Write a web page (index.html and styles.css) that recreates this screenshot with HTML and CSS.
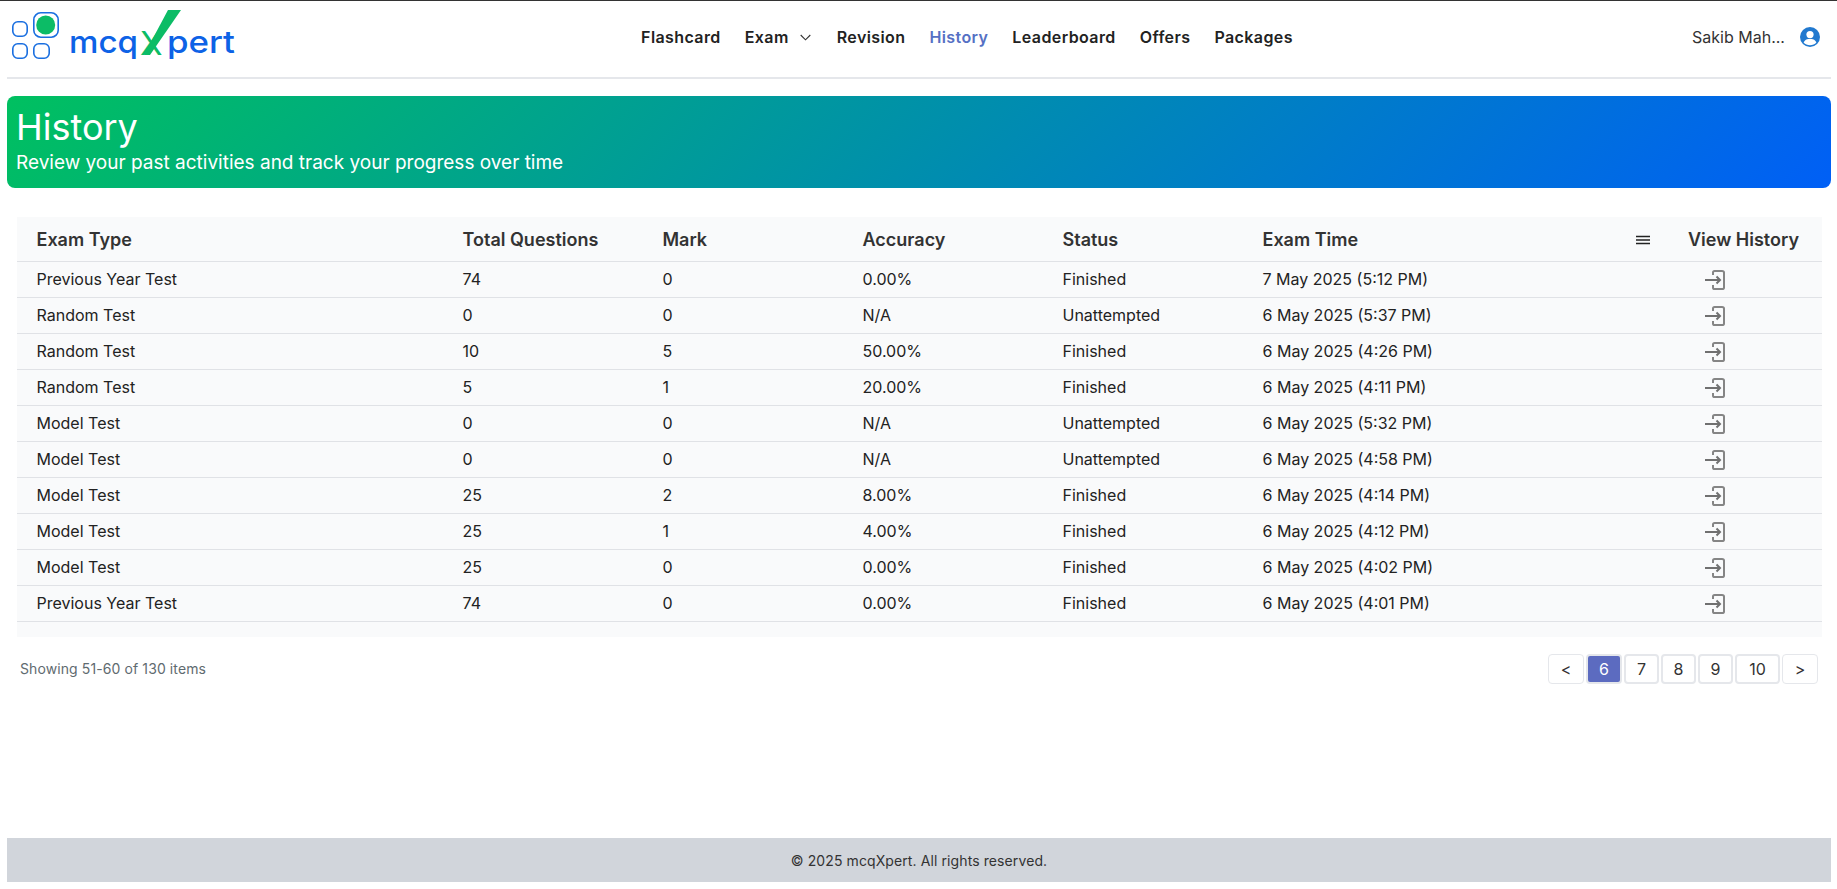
FILE: index.html
```html
<!DOCTYPE html>
<html lang="en">
<head>
    <meta charset="UTF-8">
    <meta name="viewport" content="width=device-width, initial-scale=1.0">
    <title>History - mcqXpert</title>
    <link rel="stylesheet" href="styles.css">
</head>
<body>
    <header class="header">
        <a class="logo" href="#">
            <svg class="logo-mark" width="58" height="56" viewBox="0 0 58 56" fill="none">
                <rect x="2.8" y="15.8" width="14.4" height="14.4" rx="5" stroke="#1a6fe0" stroke-width="1.6"/>
                <rect x="2.8" y="37.8" width="14.4" height="14.4" rx="5" stroke="#1a6fe0" stroke-width="1.6"/>
                <rect x="23.8" y="37.8" width="15.4" height="14.4" rx="5" stroke="#1a6fe0" stroke-width="1.6"/>
                <rect x="23.8" y="6.8" width="24.4" height="24.4" rx="7" stroke="#1a6fe0" stroke-width="1.6"/>
                <circle cx="35.7" cy="19" r="9.5" fill="#0cbc66"/>
            </svg>
            <svg class="logo-word" width="170" height="62" viewBox="0 0 170 62">
                <text x="0" y="47" class="logo-blue" textLength="69" lengthAdjust="spacingAndGlyphs">mcq</text>
                <text x="71" y="49" class="logo-green">X</text>
                <path d="M75 49 L99 4 H112 L81 49 Z" fill="#0cbc66"/>
                <text x="98" y="47" class="logo-blue" textLength="68" lengthAdjust="spacingAndGlyphs">pert</text>
            </svg>
        </a>
        <nav class="nav">
            <a href="#">Flashcard</a>
            <a href="#" class="nav-exam">Exam
                <svg width="11" height="7" viewBox="0 0 11 7" fill="none"><path d="M0.7 1 L5.5 5.8 L10.3 1" stroke="#333" stroke-width="1.1"/></svg>
            </a>
            <a href="#">Revision</a>
            <a href="#" class="active">History</a>
            <a href="#">Leaderboard</a>
            <a href="#">Offers</a>
            <a href="#">Packages</a>
        </nav>
        <div class="user">
            <span>Sakib Mah...</span>
            <svg width="20" height="20" viewBox="0 0 20 20">
                <circle cx="10" cy="10" r="10" fill="#2179cf"/>
                <circle cx="10" cy="7.6" r="3.6" fill="#fff"/>
                <path d="M3.6 15.6 C5 12.4 7.5 12 10 12 C12.5 12 15 12.4 16.4 15.6 C14.8 17.4 12.5 18.3 10 18.3 C7.5 18.3 5.2 17.4 3.6 15.6 Z" fill="#fff"/>
            </svg>
        </div>
    </header>

    <section class="hero">
        <h1>History</h1>
        <p>Review your past activities and track your progress over time</p>
    </section>

    <main class="content">
        <div class="table-wrap">
            <table class="history-table">
                <colgroup>
                    <col class="col-type">
                    <col class="col-num">
                    <col class="col-num">
                    <col class="col-num">
                    <col class="col-num">
                    <col class="col-time">
                    <col class="col-view">
                </colgroup>
                <thead>
                    <tr>
                        <th>Exam Type</th>
                        <th>Total Questions</th>
                        <th>Mark</th>
                        <th>Accuracy</th>
                        <th>Status</th>
                        <th class="time-head">Exam Time
                            <svg class="menu-icon" width="14" height="10" viewBox="0 0 14 10"><path d="M0 1.5H14M0 5H14M0 8.5H14" stroke="#222" stroke-width="1.5"/></svg>
                        </th>
                        <th class="view-head">View History</th>
                    </tr>
                </thead>
                <tbody>
                    <tr><td>Previous Year Test</td><td>74</td><td>0</td><td>0.00%</td><td>Finished</td><td>7 May 2025 (5:12 PM)</td><td class="view-cell"><svg class="enter" width="22" height="20" viewBox="0 0 22 20" fill="none"><use href="#enter-icon"/></svg></td></tr>
                    <tr><td>Random Test</td><td>0</td><td>0</td><td>N/A</td><td>Unattempted</td><td>6 May 2025 (5:37 PM)</td><td class="view-cell"><svg class="enter" width="22" height="20" viewBox="0 0 22 20" fill="none"><use href="#enter-icon"/></svg></td></tr>
                    <tr><td>Random Test</td><td>10</td><td>5</td><td>50.00%</td><td>Finished</td><td>6 May 2025 (4:26 PM)</td><td class="view-cell"><svg class="enter" width="22" height="20" viewBox="0 0 22 20" fill="none"><use href="#enter-icon"/></svg></td></tr>
                    <tr><td>Random Test</td><td>5</td><td>1</td><td>20.00%</td><td>Finished</td><td>6 May 2025 (4:11 PM)</td><td class="view-cell"><svg class="enter" width="22" height="20" viewBox="0 0 22 20" fill="none"><use href="#enter-icon"/></svg></td></tr>
                    <tr><td>Model Test</td><td>0</td><td>0</td><td>N/A</td><td>Unattempted</td><td>6 May 2025 (5:32 PM)</td><td class="view-cell"><svg class="enter" width="22" height="20" viewBox="0 0 22 20" fill="none"><use href="#enter-icon"/></svg></td></tr>
                    <tr><td>Model Test</td><td>0</td><td>0</td><td>N/A</td><td>Unattempted</td><td>6 May 2025 (4:58 PM)</td><td class="view-cell"><svg class="enter" width="22" height="20" viewBox="0 0 22 20" fill="none"><use href="#enter-icon"/></svg></td></tr>
                    <tr><td>Model Test</td><td>25</td><td>2</td><td>8.00%</td><td>Finished</td><td>6 May 2025 (4:14 PM)</td><td class="view-cell"><svg class="enter" width="22" height="20" viewBox="0 0 22 20" fill="none"><use href="#enter-icon"/></svg></td></tr>
                    <tr><td>Model Test</td><td>25</td><td>1</td><td>4.00%</td><td>Finished</td><td>6 May 2025 (4:12 PM)</td><td class="view-cell"><svg class="enter" width="22" height="20" viewBox="0 0 22 20" fill="none"><use href="#enter-icon"/></svg></td></tr>
                    <tr><td>Model Test</td><td>25</td><td>0</td><td>0.00%</td><td>Finished</td><td>6 May 2025 (4:02 PM)</td><td class="view-cell"><svg class="enter" width="22" height="20" viewBox="0 0 22 20" fill="none"><use href="#enter-icon"/></svg></td></tr>
                    <tr><td>Previous Year Test</td><td>74</td><td>0</td><td>0.00%</td><td>Finished</td><td>6 May 2025 (4:01 PM)</td><td class="view-cell"><svg class="enter" width="22" height="20" viewBox="0 0 22 20" fill="none"><use href="#enter-icon"/></svg></td></tr>
                </tbody>
            </table>
        </div>

        <div class="table-footer">
            <span class="showing">Showing 51-60 of 130 items</span>
            <div class="pagination">
                <a href="#" class="arrow">&lt;</a>
                <a href="#" class="current">6</a>
                <a href="#">7</a>
                <a href="#">8</a>
                <a href="#">9</a>
                <a href="#" class="wide">10</a>
                <a href="#" class="arrow">&gt;</a>
            </div>
        </div>
    </main>

    <footer class="footer">© 2025 mcqXpert. All rights reserved.</footer>

    <svg class="icon-defs" width="0" height="0">
        <defs>
            <g id="enter-icon">
                <path d="M9 5 V2.6 Q9 1 10.6 1 H18 Q20 1 20 2.6 V17.4 Q20 19 18 19 H10.6 Q9 19 9 17.4 V15" stroke="#858585" stroke-width="2"/>
                <path d="M1 10 H16 M12.5 6.5 L16 10 L12.5 13.5" stroke="#707070" stroke-width="2"/>
            </g>
        </defs>
    </svg>
</body>
</html>
```

FILE: styles.css
```css
* {
    box-sizing: border-box;
}

body {
    margin: 0;
    padding: 0 6px 0 7px;
    min-height: 889px;
    display: flex;
    flex-direction: column;
    background-color: #fff;
    border-top: 1px solid #333;
    font-family: 'Inter', 'Liberation Sans', sans-serif;
    color: #222;
}

a {
    text-decoration: none;
    color: inherit;
}

.header {
    height: 78px;
    flex-shrink: 0;
    display: flex;
    align-items: center;
    justify-content: space-between;
    padding-bottom: 4px;
    border-bottom: 2px solid #e5e7eb;
}

.logo {
    display: flex;
    align-items: flex-start;
    width: 240px;
    height: 62px;
    padding-left: 3px;
}

.logo-word {
    margin-left: 1px;
}

.logo-blue {
    font-family: 'Inter', sans-serif;
    font-size: 31px;
    font-weight: 500;
    fill: #0d62e6;
}

.logo-green {
    font-family: 'Inter', sans-serif;
    font-size: 33px;
    font-weight: 400;
    fill: #0cbc66;
}

.nav {
    display: flex;
    align-items: center;
    gap: 24px;
    margin-left: 96px;
    font-size: 16px;
    font-weight: 600;
    letter-spacing: 0.4px;
    color: #222;
}

.nav a.active {
    color: #5570c4;
}

.nav-exam {
    display: flex;
    align-items: center;
    gap: 11px;
    margin-right: 2px;
}

.user {
    display: flex;
    align-items: center;
    justify-content: flex-end;
    gap: 15px;
    width: 240px;
    padding-right: 11px;
    font-size: 16px;
    color: #333;
}

.hero {
    flex-shrink: 0;
    height: 92px;
    margin-top: 17px;
    padding: 11px 9px;
    border-radius: 8px;
    background: linear-gradient(135deg, #00c060, #005ff6);
    color: #fff;
}

.hero h1 {
    margin: 0;
    font-size: 36px;
    line-height: 40px;
    font-weight: 400;
}

.hero p {
    margin: 4px 0 0;
    font-size: 19px;
    line-height: 24px;
}

.content {
    flex-grow: 1;
    padding: 29px 9px 0 10px;
}

.table-wrap {
    background-color: #f9fafb;
    padding-bottom: 15px;
}

.history-table {
    width: 100%;
    border-collapse: collapse;
    table-layout: fixed;
    font-size: 16px;
}

.col-type {
    width: 426px;
}

.col-num {
    width: 200px;
}

.col-time {
    width: 407px;
}

.history-table th {
    height: 44px;
    padding: 2px 0 0 19.5px;
    text-align: left;
    font-size: 18px;
    font-weight: 600;
    color: #333;
    border-bottom: 1px solid #e0e2e6;
}

.history-table td {
    height: 36px;
    padding: 0 0 0 19.5px;
    border-bottom: 1px solid #e0e2e6;
    color: #222;
}

.time-head {
    position: relative;
}

.menu-icon {
    position: absolute;
    right: 0;
    top: 18px;
}

.history-table .view-head {
    padding-left: 38px;
}

.history-table .view-cell {
    padding: 2px 0 0 54px;
}

.enter {
    display: block;
}

.table-footer {
    display: flex;
    align-items: center;
    justify-content: space-between;
    margin-top: 17px;
    padding: 0 4px 0 3px;
}

.showing {
    font-size: 14px;
    letter-spacing: 0.1px;
    color: #5f6b70;
}

.pagination {
    display: flex;
    gap: 2px;
}

.pagination a {
    width: 35px;
    height: 30px;
    display: flex;
    align-items: center;
    justify-content: center;
    border: 2px solid #e5e7eb;
    border-radius: 4px;
    background-color: #fff;
    font-size: 16px;
    color: #333;
}

.pagination a.arrow {
    width: 36px;
    border-width: 1px;
}

.pagination a.current {
    width: 36px;
    background-color: #5c6bc0;
    color: #fff;
}

.pagination a.wide {
    width: 45px;
}

.footer {
    flex-shrink: 0;
    height: 44px;
    margin-bottom: 7px;
    display: flex;
    align-items: center;
    justify-content: center;
    background-color: #d1d5db;
    font-size: 14px;
    letter-spacing: 0.1px;
    color: #333;
}

.icon-defs {
    position: absolute;
}
```
